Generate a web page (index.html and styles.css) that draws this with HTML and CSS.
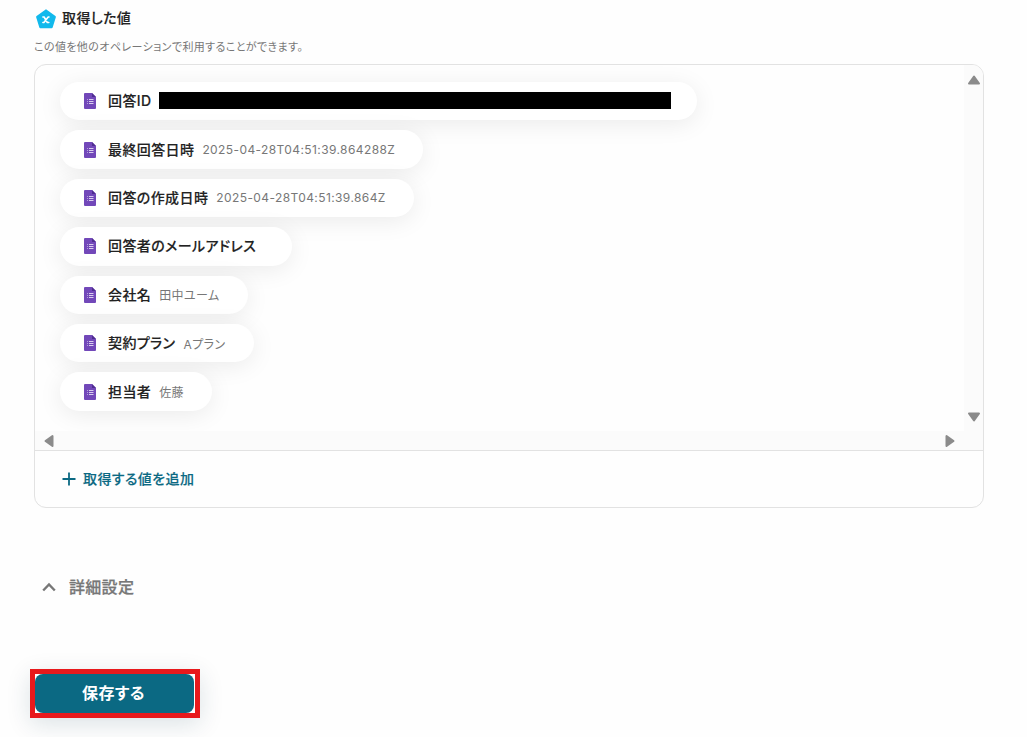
FILE: index.html
```html
<!DOCTYPE html>
<html lang="ja">

<head>
	<meta charset="UTF-8">
	<title>取得した値</title>
	<link rel="stylesheet" href="styles.css">
</head>

<body>
	<svg class="sprite">
		<symbol id="form" viewBox="0 0 12 16">
			<path fill="#7248b9" d="M1 0h7l4 4v11a1 1 0 0 1-1 1H1a1 1 0 0 1-1-1V1a1 1 0 0 1 1-1z" />
			<path fill="#4f2d91" d="M8 0l4 4H8z" />
			<path fill="#d9cdee" d="M5 6h4.500v1H5zM5 8h4.500v1H5zM5 10h4.500v1H5z" />
			<path fill="#b39fdb" d="M3 6h1v1H3zM3 8h1v1H3zM3 10h1v1H3z" />
		</symbol>
	</svg>

	<div class="container">
		<div class="heading">
			<svg class="logo" viewBox="0 0 20 20">
				<path fill="#12b9ec" stroke="#12b9ec" stroke-width="2.4" stroke-linejoin="round" d="M10 1.6L18.7 7.9L15.6 18H4.4L1.3 7.9z" />
				<path fill="none" stroke="#fff" stroke-width="1.6" stroke-linecap="round" stroke-linejoin="round" d="M6.900 8h1.200l3.200 5.500h1.500M13 8h-.8l-4.300 5.500h-1" />
			</svg>
			<h1>取得した値</h1>
		</div>
		<p class="note">この値を他のオペレーションで利用することができます。</p>

		<div class="panel">
			<div class="scroll">
				<div class="list">
					<div class="pill"><svg class="form"><use href="#form" /></svg><b>回答ID</b><span class="mask"></span></div>
					<div class="pill"><svg class="form"><use href="#form" /></svg><b>最終回答日時</b><span>2025-04-28T04:51:39.864288Z</span></div>
					<div class="pill"><svg class="form"><use href="#form" /></svg><b>回答の作成日時</b><span>2025-04-28T04:51:39.864Z</span></div>
					<div class="pill"><svg class="form"><use href="#form" /></svg><b>回答者のメールアドレス</b><span></span></div>
					<div class="pill"><svg class="form"><use href="#form" /></svg><b>会社名</b><span>田中ユーム</span></div>
					<div class="pill"><svg class="form"><use href="#form" /></svg><b>契約プラン</b><span>Aプラン</span></div>
					<div class="pill"><svg class="form"><use href="#form" /></svg><b>担当者</b><span>佐藤</span></div>
				</div>
				<div class="bar-y">
					<svg class="arrow" viewBox="0 0 14 10"><path d="M7 1.500l5 7h-10z" /></svg>
					<svg class="arrow" viewBox="0 0 14 10"><path d="M7 8.500l5-7h-10z" /></svg>
				</div>
				<div class="bar-x">
					<svg class="arrow-x" viewBox="0 0 10 14"><path d="M1.500 7l7-5v10z" /></svg>
					<svg class="arrow-x" viewBox="0 0 10 14"><path d="M8.500 7l-7-5v10z" /></svg>
				</div>
			</div>
			<div class="add">
				<svg class="plus" viewBox="0 0 14 14"><path d="M7 .5v13M.5 7h13" /></svg>
				<span>取得する値を追加</span>
			</div>
		</div>

		<div class="detail">
			<svg class="chevron" viewBox="0 0 14 10"><path d="M1.200 8.500l5.800-6l5.800 6" /></svg>
			<span>詳細設定</span>
		</div>

		<div class="save-frame">
			<button class="save">保存する</button>
		</div>
	</div>
</body>

</html>
```
FILE: styles.css
```css
* {
	box-sizing: border-box;
}

body {
	margin: 0;
	background-color: #fefefe;
	font-family: Inter, "Noto Sans CJK JP", sans-serif;
	font-feature-settings: "palt";
	color: #222;
	white-space: nowrap;
	overflow: hidden;
}

.sprite {
	display: none;
}

.container {
	height: 737px;
	padding: 5px 43px 0 34px;
}

.heading {
	display: flex;
	align-items: center;
	height: 24px;
	padding-left: 2px;
	gap: 6px;
}

.logo {
	width: 20px;
	height: 20px;
	margin-top: 4px;
}

h1 {
	margin: 0;
	font-size: 14px;
	font-weight: 500;
	letter-spacing: 0.4px;
	-webkit-text-stroke: 0.15px;
}

.note {
	margin: 9px 0 8px;
	height: 18px;
	font-size: 11px;
	line-height: 18px;
	letter-spacing: 0.4px;
	color: #777;
}

.panel {
	width: 950px;
	height: 444px;
	border: 1px solid #e2e2e2;
	border-radius: 12px;
	overflow: hidden;
}

.scroll {
	display: grid;
	grid-template-columns: 1fr 19px;
	grid-template-rows: 366px 19px;
	border-bottom: 1px solid #e2e2e2;
}

.list {
	display: flex;
	flex-direction: column;
	align-items: flex-start;
	gap: 10px;
	padding: 17px 25px;
	overflow: hidden;
}

.pill {
	display: flex;
	align-items: center;
	height: 38.4px;
	padding: 0 28.2px 0 24px;
	border-radius: 20px;
	background-color: #fff;
	box-shadow: 0 4px 24px rgba(0, 0, 0, 0.08);
}

.form {
	width: 12px;
	height: 16px;
	margin-right: 12px;
}

.pill b {
	padding-bottom: 2px;
	font-size: 14px;
	font-weight: 500;
	letter-spacing: 0.4px;
	-webkit-text-stroke: 0.15px;
}

.pill span {
	margin-left: 8px;
	font-size: 12px;
	letter-spacing: 0.4px;
	color: #777;
}

.pill .mask {
	width: 512px;
	height: 17px;
	margin: 0 -2px 1px 7px;
	background-color: #000;
}

.bar-y {
	grid-row: 1 / 3;
	grid-column: 2;
	display: flex;
	flex-direction: column;
	align-items: center;
	justify-content: space-between;
	padding: 10px 0 28px;
	background-color: #fbfbfb;
}

.bar-x {
	display: flex;
	align-items: center;
	justify-content: space-between;
	padding: 0 9px;
	background-color: #fbfbfb;
}

.arrow {
	width: 14px;
	height: 10px;
}

.arrow-x {
	width: 10px;
	height: 14px;
}

.arrow path,
.arrow-x path {
	fill: #8b8b8b;
	stroke: #8b8b8b;
	stroke-width: 2;
	stroke-linejoin: round;
}

.add {
	display: flex;
	align-items: center;
	gap: 7px;
	height: 56px;
	padding: 0 0 1px 27px;
	font-size: 14px;
	font-weight: 500;
	letter-spacing: 0.4px;
	color: #0b6983;
	-webkit-text-stroke: 0.15px;
}

.add span {
	padding-bottom: 2px;
}

.plus {
	width: 14px;
	height: 14px;
	fill: none;
	stroke: #0b6983;
	stroke-width: 1.8;
}

.detail {
	display: flex;
	align-items: center;
	gap: 13px;
	height: 24px;
	margin-top: 67px;
	padding-left: 8px;
	font-size: 16px;
	font-weight: 500;
	letter-spacing: 0.3px;
	color: #777;
	-webkit-text-stroke: 0.25px;
}

.detail span {
	padding-bottom: 2px;
}

.chevron {
	width: 14px;
	height: 10px;
	fill: none;
	stroke: #777;
	stroke-width: 2.4;
}

.save-frame {
	width: 170px;
	height: 49px;
	margin: 70px 0 0 -4px;
	border: 5px solid #e8191c;
	box-shadow: 0 6px 24px rgba(10, 60, 80, 0.14);
}

.save {
	display: block;
	width: 159px;
	height: 39px;
	padding: 0 2px 3px 0;
	border: 0;
	border-radius: 8px;
	background-color: #0b6983;
	font: inherit;
	font-size: 16px;
	font-weight: 700;
	letter-spacing: 0.5px;
	color: #fff;
}
```
